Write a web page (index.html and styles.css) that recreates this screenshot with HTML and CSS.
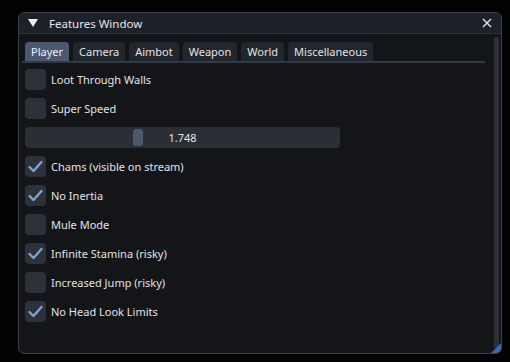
FILE: index.html
```html
<!DOCTYPE html>
<html lang="en">
<head>
  <meta charset="UTF-8" />
  <title>Features Window</title>
  <link rel="stylesheet" href="styles.css">
</head>
<body>
  <div class="window">
    <div class="title-bar">
      <span class="collapse-arrow"></span>
      <span class="title">Features Window</span>
      <svg class="close-btn" viewBox="0 0 10 10"><path d="M1 1 L9 9 M9 1 L1 9" /></svg>
    </div>

    <div class="window-body">
      <div class="content">
        <div class="tab-bar">
          <div class="tab active">Player</div>
          <div class="tab">Camera</div>
          <div class="tab">Aimbot</div>
          <div class="tab">Weapon</div>
          <div class="tab">World</div>
          <div class="tab">Miscellaneous</div>
        </div>

        <div class="options">
          <label class="option">
            <span class="checkbox"></span>
            Loot Through Walls
          </label>
          <label class="option">
            <span class="checkbox"></span>
            Super Speed
          </label>

          <div class="slider">
            <span class="slider-grab" style="left: 108px;"></span>
            <span class="slider-value">1.748</span>
          </div>

          <label class="option">
            <span class="checkbox checked">
              <svg viewBox="0 0 21 21"><path d="M4.5 11 L8.5 15 L16.5 6" /></svg>
            </span>
            Chams (visible on stream)
          </label>
          <label class="option">
            <span class="checkbox checked">
              <svg viewBox="0 0 21 21"><path d="M4.5 11 L8.5 15 L16.5 6" /></svg>
            </span>
            No Inertia
          </label>
          <label class="option">
            <span class="checkbox"></span>
            Mule Mode
          </label>
          <label class="option">
            <span class="checkbox checked">
              <svg viewBox="0 0 21 21"><path d="M4.5 11 L8.5 15 L16.5 6" /></svg>
            </span>
            Infinite Stamina (risky)
          </label>
          <label class="option">
            <span class="checkbox"></span>
            Increased Jump (risky)
          </label>
          <label class="option">
            <span class="checkbox checked">
              <svg viewBox="0 0 21 21"><path d="M4.5 11 L8.5 15 L16.5 6" /></svg>
            </span>
            No Head Look Limits
          </label>
        </div>
      </div>

      <div class="scrollbar"></div>
    </div>

    <div class="resize-grip"></div>
  </div>
</body>
</html>
```

FILE: styles.css
```css
body {
  margin: 0;
  background-color: #030303;
  font-family: 'Noto Sans', sans-serif;
  font-size: 11px;
  color: #e2e3e6;
  padding: 12px 0 0 18px;
}

.window {
  position: relative;
  width: 482px;
  height: 340px;
  border: 1px solid #3a3e46;
  border-radius: 6px;
  background-color: #131519;
  overflow: hidden;
  display: flex;
  flex-direction: column;
}

.title-bar {
  display: flex;
  align-items: center;
  height: 20px;
  background-color: #1d2129;
  border-bottom: 1px solid #2c3038;
  padding: 0 9px 0 9px;
}

.collapse-arrow {
  width: 0;
  height: 0;
  border-left: 5px solid transparent;
  border-right: 5px solid transparent;
  border-top: 8px solid #f2f2f2;
  margin-right: 11px;
}

.title {
  flex: 1;
  font-size: 11.5px;
  color: #e4e5e8;
}

.close-btn {
  width: 10px;
  height: 10px;
}

.close-btn path {
  stroke: #e4e5e8;
  stroke-width: 1.4;
  fill: none;
}

.window-body {
  flex: 1;
  display: flex;
}

.content {
  flex: 1;
  padding: 8px 9px 0 3px;
}

.tab-bar {
  display: flex;
  gap: 4px;
  border-bottom: 2px solid #2f3a4b;
  padding-left: 3px;
}

.tab {
  height: 19px;
  line-height: 19px;
  padding: 0 6px;
  background-color: #22262d;
  border-radius: 4px 4px 0 0;
  color: #e2e3e6;
}

.tab.active {
  background-color: #4b5870;
  color: #eef0f4;
}

.options {
  display: flex;
  flex-direction: column;
  gap: 8px;
  padding: 6px 0 0 3px;
}

.option {
  display: flex;
  align-items: center;
  gap: 5px;
  height: 21px;
}

.checkbox {
  width: 21px;
  height: 21px;
  border-radius: 4px;
  background-color: #2d3139;
}

.checkbox svg {
  width: 21px;
  height: 21px;
  display: block;
}

.checkbox svg path {
  fill: none;
  stroke: #7ea5cf;
  stroke-width: 2.4;
  stroke-linecap: round;
  stroke-linejoin: round;
}

.slider {
  position: relative;
  width: 315px;
  height: 21px;
  border-radius: 4px;
  background-color: #2a2e35;
  display: flex;
  align-items: center;
  justify-content: center;
}

.slider-grab {
  position: absolute;
  top: 2px;
  width: 10px;
  height: 17px;
  border-radius: 3px;
  background-color: #4c5870;
}

.slider-value {
  position: relative;
  color: #e4e5e8;
}

.scrollbar {
  width: 5px;
  margin: 3px 2px 4px 0;
  background-color: #2c3038;
  border-radius: 2px;
}

.resize-grip {
  position: absolute;
  right: 0;
  bottom: 0;
  width: 0;
  height: 0;
  border-left: 10px solid transparent;
  border-bottom: 10px solid #3d6aa6;
}
```
